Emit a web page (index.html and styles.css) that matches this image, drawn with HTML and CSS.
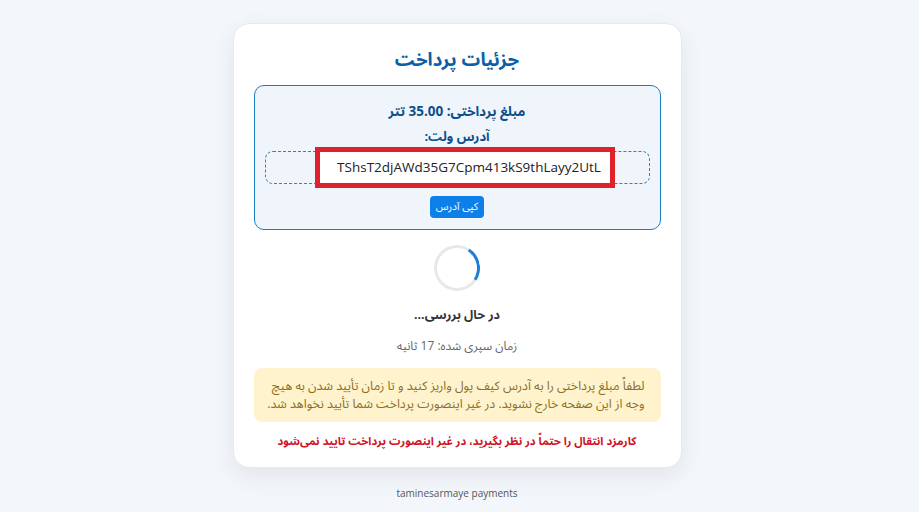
FILE: index.html
```html
<!DOCTYPE html>
<html lang="fa" dir="rtl">
<head>
    <meta charset="UTF-8">
    <meta name="viewport" content="width=device-width, initial-scale=1.0">
    <title>جزئیات پرداخت</title>
    <link rel="stylesheet" href="styles.css">
</head>
<body>

    <div class="page">
        <!-- Payment Card -->
        <div class="card">
            <h1 class="card-title">جزئیات پرداخت</h1>

            <div class="info-box">
                <div class="amount">مبلغ پرداختی: <span class="ltr">35.00</span> تتر</div>
                <div class="label">آدرس ولت:</div>
                <div class="wallet">
                    <span class="wallet-address" dir="ltr">TShsT2djAWd35G7Cpm413kS9thLayy2UtL</span>
                </div>
                <button class="copy-btn">کپی آدرس</button>
            </div>

            <div class="spinner"></div>

            <div class="status">در حال بررسی...</div>
            <div class="timer">زمان سپری شده: 17 ثانیه</div>

            <div class="notice">
                لطفاً مبلغ پرداختی را به آدرس کیف پول واریز کنید و تا زمان تأیید شدن به هیچ<br>
                وجه از این صفحه خارج نشوید. در غیر اینصورت پرداخت شما تأیید نخواهد شد.
            </div>

            <div class="warning">کارمزد انتقال را حتماً در نظر بگیرید، در غیر اینصورت پرداخت تایید نمی‌شود</div>
        </div>

        <div class="footer">taminesarmaye payments</div>
    </div>

</body>
</html>
```

FILE: styles.css
```css
/* General Styles */
body {
    font-family: "Open Sans", "Noto Sans Arabic", "Noto Naskh Arabic", "DejaVu Sans", sans-serif;
    background-color: #f3f6fb;
    margin: 0;
    color: #333;
}

.page {
    display: flex;
    flex-direction: column;
    align-items: center;
    padding: 23px 5px 0 0;
}

/* Card */
.card {
    box-sizing: border-box;
    width: 449px;
    padding: 0 20px 16px;
    background: #fff;
    border: 1px solid #e6e9ef;
    border-radius: 16px;
    box-shadow: 0 8px 24px rgba(0, 0, 0, 0.08);
    text-align: center;
}

.card-title {
    margin: 20px 0 11px;
    font-size: 18.5px;
    line-height: 30px;
    font-weight: bold;
    color: #0b5ea8;
}

/* Info Box */
.info-box {
    background: #f0f5fc;
    border: 1px solid #1a7fc1;
    border-radius: 10px;
    padding: 13px 10px 11px;
}

.amount,
.label {
    font-size: 13.5px;
    line-height: 25px;
    font-weight: bold;
    color: #0d4f8b;
}

.label {
    font-size: 13px;
}

.ltr {
    unicode-bidi: isolate;
}

.wallet {
    margin: 2px 0 9px;
    height: 31px;
    border: 1px dashed #2a86b8;
    border-radius: 8px;
    display: flex;
    justify-content: center;
    align-items: center;
}

.wallet-address {
    flex-shrink: 0;
    box-sizing: border-box;
    width: 300px;
    height: 41px;
    margin-left: 16px;
    padding-left: 8px;
    line-height: 31px;
    background: #fff;
    border: 5px solid #e0202b;
    font-size: 13.5px;
    color: #222;
    text-align: center;
}

.copy-btn {
    font-family: inherit;
    background: #0d7fe8;
    color: #fff;
    border: none;
    border-radius: 4px;
    padding: 0 6px;
    height: 22px;
    font-size: 10.5px;
    cursor: pointer;
}

/* Spinner */
.spinner {
    width: 40px;
    height: 40px;
    margin: 15px auto 0;
    border: 3px solid #e8e8e8;
    border-right-color: #1a7fd8;
    border-radius: 50%;
    transform: rotate(-12deg);
}

.status {
    margin-top: 13px;
    font-size: 12.5px;
    line-height: 22px;
    font-weight: bold;
    color: #333;
}

.timer {
    margin-top: 10px;
    font-size: 12px;
    line-height: 20px;
    color: #666;
}

/* Notice */
.notice {
    margin-top: 12px;
    background: #fff3cd;
    color: #8a6d1e;
    border-radius: 8px;
    padding: 9px 16px;
    font-size: 12.4px;
    line-height: 18px;
    text-align: right;
    white-space: nowrap;
}

.warning {
    margin-top: 9px;
    font-size: 11.3px;
    line-height: 20px;
    font-weight: bold;
    color: #d1121f;
}

.footer {
    margin-top: 18px;
    font-size: 10px;
    color: #555;
}
```
